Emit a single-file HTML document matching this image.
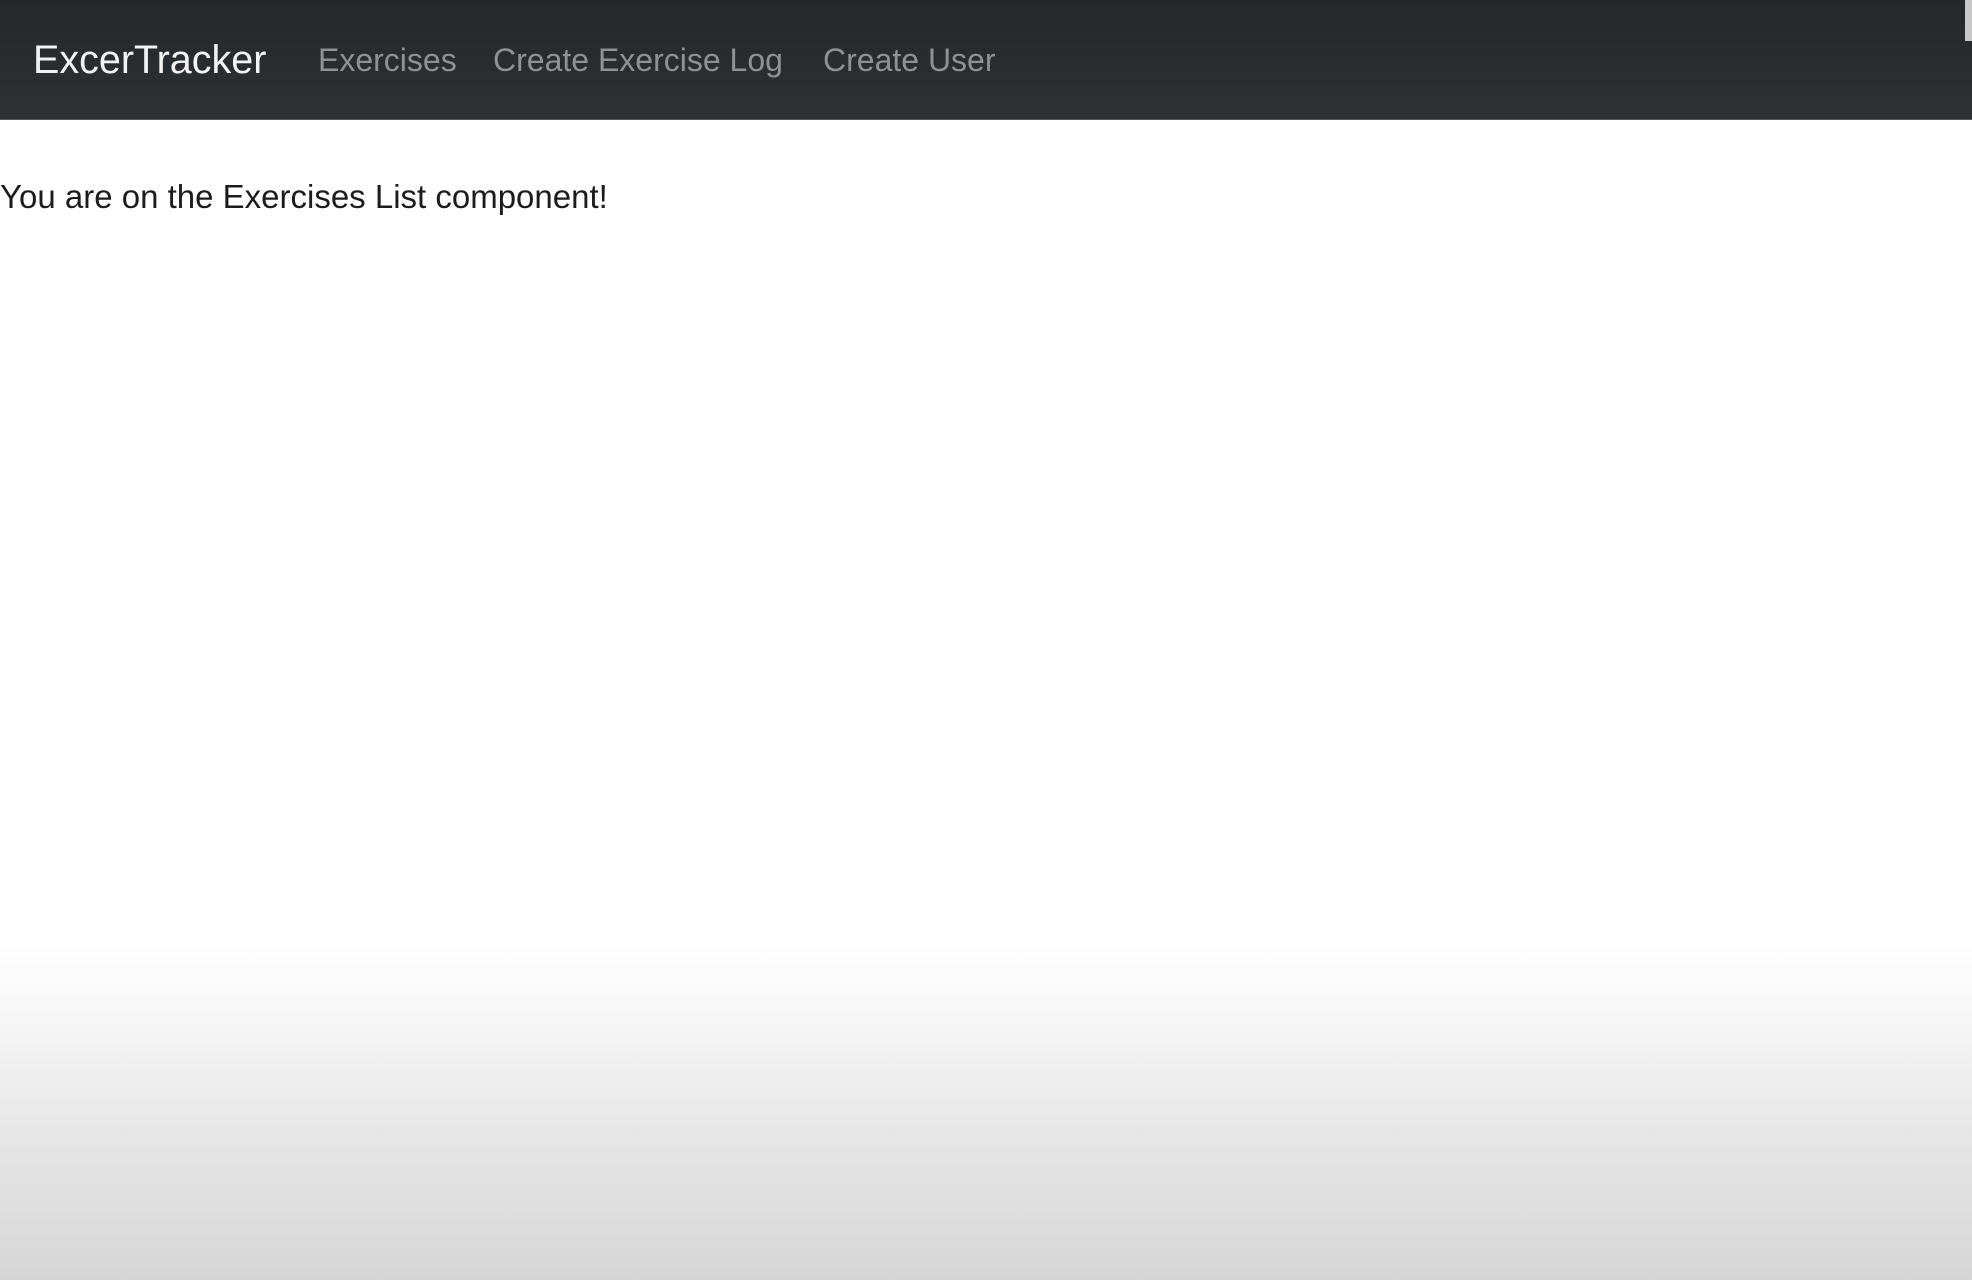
<!DOCTYPE html>
<html><head><meta charset="utf-8"><style>
html,body{margin:0;padding:0;width:1972px;height:1280px;overflow:hidden}
body{background:linear-gradient(to bottom,#fff 0,#fff 945px,#f4f4f4 1035px,#e6e6e6 1135px,#d6d6d6 1280px);font-family:"Liberation Sans",Arial,sans-serif;position:relative}
.nav{position:absolute;left:0;top:0;width:1972px;height:119px;background:linear-gradient(to bottom,#25282b,#2d3134);border-bottom:1px solid #555}
.t{position:absolute;white-space:nowrap;line-height:1}
.brand{left:33px;top:41px;font-size:39.5px;color:#f2f2f2}
.l{top:44px;font-size:32px;color:#8f9193}
.main{left:0;top:180px;font-size:33px;color:#1c1c1c}
.sb{position:absolute;right:0;top:0;width:7px;height:41px;background:#c8c8c8}
</style></head><body>
<div class="nav"></div>
<div class="t brand">ExcerTracker</div>
<div class="t l" style="left:318px">Exercises</div>
<div class="t l" style="left:493px">Create Exercise Log</div>
<div class="t l" style="left:823px">Create User</div>
<div class="sb"></div>
<div class="t main">You are on the Exercises List component!</div>
</body></html>
